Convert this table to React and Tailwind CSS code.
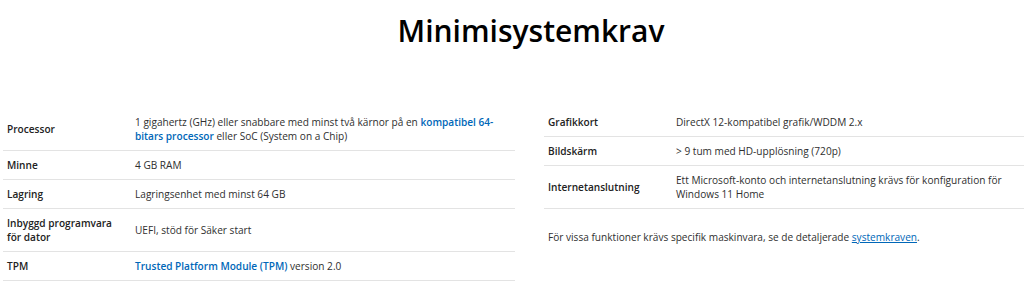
import React from "react";

const leftRows = [
  {
    label: "Processor",
    value: (
      <>
        1 gigahertz (GHz) eller snabbare med minst två kärnor på en{" "}
        <a href="#" className="font-semibold text-[#0067b8]">
          kompatibel 64-
          <br />
          bitars processor
        </a>{" "}
        eller SoC (System on a Chip)
      </>
    ),
  },
  { label: "Minne", value: "4 GB RAM" },
  { label: "Lagring", value: "Lagringsenhet med minst 64 GB" },
  {
    label: (
      <>
        Inbyggd programvara
        <br />
        för dator
      </>
    ),
    value: "UEFI, stöd för Säker start",
  },
  {
    label: "TPM",
    value: (
      <>
        <a href="#" className="font-semibold text-[#0067b8]">
          Trusted Platform Module (TPM)
        </a>{" "}
        version 2.0
      </>
    ),
  },
];

const rightRows = [
  { label: "Grafikkort", value: "DirectX 12-kompatibel grafik/WDDM 2.x" },
  { label: "Bildskärm", value: "> 9 tum med HD-upplösning (720p)" },
  {
    label: "Internetanslutning",
    value: (
      <>
        Ett Microsoft-konto och internetanslutning krävs för konfiguration för
        <br />
        Windows 11 Home
      </>
    ),
  },
];

const SpecTable = ({ rows, labelWidth }) => (
  <div className="flex flex-col">
    {rows.map((row, i) => (
      <div key={i} className="flex items-center border-b border-[#e3e3e3] py-[7px]">
        <div className={`${labelWidth} shrink-0 pl-1 font-semibold text-[#222]`}>
          {row.label}
        </div>
        <div className="flex-1 text-[#2f2f2f]">{row.value}</div>
      </div>
    ))}
  </div>
);

const App = () => {
  return (
    <div
      className="h-[286px] w-[1024px] overflow-hidden bg-white text-[10.1px] leading-[14px]"
      style={{ fontFamily: "'Open Sans', 'Noto Sans', sans-serif" }}
    >
      <h1 className="pl-[38px] pt-[11px] text-center text-[30px] font-semibold leading-[40px] text-black">
        Minimisystemkrav
      </h1>
      <div className="mt-[57px] flex gap-[29px] pl-[3px]">
        <div className="w-[512px]">
          <SpecTable rows={leftRows} labelWidth="w-[132px]" />
        </div>
        <div className="flex-1">
          <SpecTable rows={rightRows} labelWidth="w-[132px]" />
          <p className="mt-[21px] pl-1 text-[#2f2f2f]">
            För vissa funktioner krävs specifik maskinvara, se de detaljerade{" "}
            <a href="#" className="text-[#0067b8] underline">
              systemkraven
            </a>
            .
          </p>
        </div>
      </div>
    </div>
  );
};

export default App;
